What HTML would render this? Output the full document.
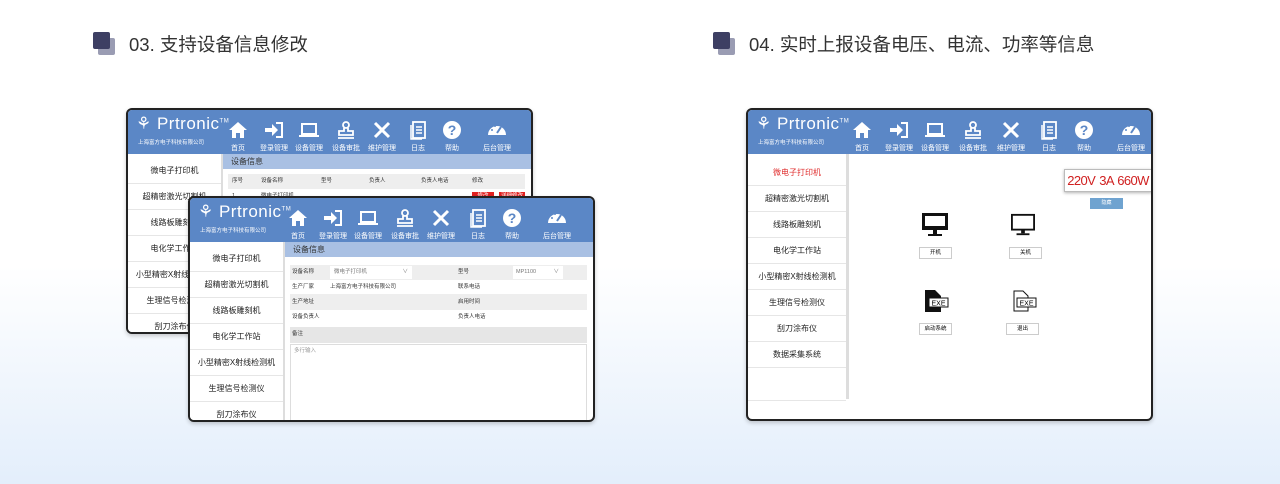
<!DOCTYPE html>
<html><head><meta charset="utf-8"><style>
*{margin:0;padding:0;box-sizing:border-box}
body{width:1280px;height:484px;overflow:hidden;position:relative;font-family:"Liberation Sans","Noto Sans CJK SC",sans-serif;background:linear-gradient(180deg,#ffffff 0%,#ffffff 55%,#e3eefb 100%)}
.h{position:absolute;font-size:18.5px;color:#333;display:flex;align-items:center}
.sq{position:relative;width:24px;height:24px;margin-right:12px}
.sq i{position:absolute;width:17px;height:17px;border-radius:2px}
.sq .a{left:5px;top:6px;background:#9a9cb3}
.sq .b{left:0;top:0;background:#3d3f63}
.win{position:absolute;width:407px;background:#fff;border:2px solid #222;border-radius:6px;overflow:hidden;box-shadow:0 2px 4px rgba(0,0,0,.2)}
.hd{position:absolute;left:0;top:0;right:0;height:44px;background:#5b87c6;color:#fff}
.logo{position:absolute;left:8px;top:4px;font-size:17px;letter-spacing:.5px}
.logo sup{font-size:6px}
.sub{position:absolute;left:10px;top:28px;font-size:5.5px;white-space:nowrap}
.nav{position:absolute;top:10px;width:40px;text-align:center;font-size:7px;transform:translateX(-50%)}
.nav svg{display:block;margin:0 auto 3px;width:20px;height:20px}
.sb{position:absolute;left:0;top:44px;width:95px;bottom:0;background:#fff;border-right:2px solid #ddd;padding-top:4px}
.sb div{height:26px;line-height:26px;text-align:center;font-size:8px;color:#222;border-bottom:1px solid #e6e6e6}
.bar{position:absolute;left:95px;right:0;top:44px;height:15px;background:#a9c0e3;font-size:8px;line-height:15px;padding-left:8px;color:#333}
.row{position:absolute;left:100px;right:6px;height:15px;font-size:5.5px;line-height:15px;color:#333}
</style></head><body>

<div class="h" style="left:93px;top:31px"><div class="sq"><i class="a"></i><i class="b"></i></div>03. 支持设备信息修改</div>
<div class="h" style="left:713px;top:31px"><div class="sq"><i class="a"></i><i class="b"></i></div>04. 实时上报设备电压、电流、功率等信息</div>

<svg width="0" height="0" style="position:absolute">
<defs>
<g id="i1"><path d="M10 2L1 10H4V18H8V13H12V18H16V10H19Z" fill="#fff"/></g>
<g id="i2"><path d="M1 8H8V4L14 10L8 16V12H1Z" fill="#fff"/><path d="M12 3H18V17H12" stroke="#fff" stroke-width="2" fill="none"/></g>
<g id="i3"><rect x="3" y="4" width="14" height="10" stroke="#fff" stroke-width="2" fill="none"/><path d="M0 16H20" stroke="#fff" stroke-width="2"/></g>
<g id="i4"><circle cx="10" cy="5" r="3" stroke="#fff" stroke-width="1.8" fill="none"/><path d="M8 8V11H3V15H17V11H12V8M2 18H18" stroke="#fff" stroke-width="1.8" fill="none"/></g>
<g id="i5"><path d="M3 3L17 17M17 3L3 17" stroke="#fff" stroke-width="3"/></g>
<g id="i6"><rect x="5" y="2" width="12" height="16" stroke="#fff" stroke-width="1.8" fill="none"/><path d="M3 5V19H14M8 7H14M8 10H14M8 13H14" stroke="#fff" stroke-width="1.5" fill="none"/></g>
<g id="i7"><circle cx="10" cy="10" r="9" fill="#fff"/><text x="10" y="15" font-size="14" font-weight="bold" text-anchor="middle" fill="#5b87c6" font-family="Liberation Sans">?</text></g>
<g id="i8"><path d="M1 15A9 9 0 1 1 19 15Z" fill="#fff"/><path d="M10 13L14 7" stroke="#5b87c6" stroke-width="2"/><circle cx="5" cy="10" r="1" fill="#5b87c6"/><circle cx="8" cy="6" r="1" fill="#5b87c6"/></g>
</defs></svg>

<!-- Window 1 -->
<div class="win" style="left:126px;top:108px;height:226px">
 <div class="hd">
  <div class="logo">⚘ Prtronic<sup>TM</sup></div><div class="sub">上海富方电子科技有限公司</div>
  <div class="nav" style="left:110px"><svg viewBox="0 0 20 20"><use href="#i1"/></svg>首页</div>
  <div class="nav" style="left:146px"><svg viewBox="0 0 20 20"><use href="#i2"/></svg>登录管理</div>
  <div class="nav" style="left:181px"><svg viewBox="0 0 20 20"><use href="#i3"/></svg>设备管理</div>
  <div class="nav" style="left:218px"><svg viewBox="0 0 20 20"><use href="#i4"/></svg>设备审批</div>
  <div class="nav" style="left:254px"><svg viewBox="0 0 20 20"><use href="#i5"/></svg>维护管理</div>
  <div class="nav" style="left:290px"><svg viewBox="0 0 20 20"><use href="#i6"/></svg>日志</div>
  <div class="nav" style="left:324px"><svg viewBox="0 0 20 20"><use href="#i7"/></svg>帮助</div>
  <div class="nav" style="left:369px"><svg viewBox="0 0 20 20"><use href="#i8"/></svg>后台管理</div>
 </div>
 <div class="sb"><div>微电子打印机</div><div>超精密激光切割机</div><div>线路板雕刻机</div><div>电化学工作站</div><div>小型精密X射线检测机</div><div>生理信号检测仪</div><div>刮刀涂布仪</div></div>
 <div class="bar">设备信息</div>
 <div class="row" style="top:64px;background:#eee"><span style="position:absolute;left:4px">序号</span><span style="position:absolute;left:33px">设备名称</span><span style="position:absolute;left:93px">型号</span><span style="position:absolute;left:141px">负责人</span><span style="position:absolute;left:193px">负责人电话</span><span style="position:absolute;left:244px">修改</span></div>
 <div class="row" style="top:79px"><span style="position:absolute;left:4px">1</span><span style="position:absolute;left:33px">微电子打印机</span><span style="position:absolute;left:244px;top:3px;width:22px;height:9px;background:#e02020;color:#fff;line-height:9px;text-align:center">修改</span><span style="position:absolute;left:271px;top:3px;width:26px;height:9px;background:#e02020;color:#fff;line-height:9px;text-align:center">详细修改</span></div>
</div>

<!-- Window 2 -->
<div class="win" style="left:188px;top:196px;height:226px">
 <div class="hd">
  <div class="logo">⚘ Prtronic<sup>TM</sup></div><div class="sub">上海富方电子科技有限公司</div>
  <div class="nav" style="left:108px"><svg viewBox="0 0 20 20"><use href="#i1"/></svg>首页</div>
  <div class="nav" style="left:143px"><svg viewBox="0 0 20 20"><use href="#i2"/></svg>登录管理</div>
  <div class="nav" style="left:178px"><svg viewBox="0 0 20 20"><use href="#i3"/></svg>设备管理</div>
  <div class="nav" style="left:215px"><svg viewBox="0 0 20 20"><use href="#i4"/></svg>设备审批</div>
  <div class="nav" style="left:251px"><svg viewBox="0 0 20 20"><use href="#i5"/></svg>维护管理</div>
  <div class="nav" style="left:288px"><svg viewBox="0 0 20 20"><use href="#i6"/></svg>日志</div>
  <div class="nav" style="left:322px"><svg viewBox="0 0 20 20"><use href="#i7"/></svg>帮助</div>
  <div class="nav" style="left:367px"><svg viewBox="0 0 20 20"><use href="#i8"/></svg>后台管理</div>
 </div>
 <div class="sb"><div>微电子打印机</div><div>超精密激光切割机</div><div>线路板雕刻机</div><div>电化学工作站</div><div>小型精密X射线检测机</div><div>生理信号检测仪</div><div>刮刀涂布仪</div></div>
 <div class="bar">设备信息</div>
 <div class="row" style="top:67px;background:#eee"><span style="position:absolute;left:2px">设备名称</span><span style="position:absolute;left:40px;top:1px;width:82px;height:13px;background:#fff;line-height:13px;padding-left:4px;color:#777">微电子打印机<span style="position:absolute;right:4px">∨</span></span><span style="position:absolute;left:168px">型号</span><span style="position:absolute;left:223px;top:1px;width:50px;height:13px;background:#fff;line-height:13px;padding-left:3px;color:#777">MP1100<span style="position:absolute;right:4px">∨</span></span></div>
 <div class="row" style="top:82px;border-bottom:1px solid #eee"><span style="position:absolute;left:2px">生产厂家</span><span style="position:absolute;left:40px">上海富方电子科技有限公司</span><span style="position:absolute;left:168px">联系电话</span></div>
 <div class="row" style="top:97px;background:#eee"><span style="position:absolute;left:2px">生产地址</span><span style="position:absolute;left:168px">启用时间</span></div>
 <div class="row" style="top:112px"><span style="position:absolute;left:2px">设备负责人</span><span style="position:absolute;left:168px">负责人电话</span></div>
 <div class="row" style="top:129px;height:16px;background:#e6e6e6"><span style="position:absolute;left:2px">备注</span></div>
 <div class="row" style="top:146px;height:80px;border:1px solid #ddd;line-height:12px;color:#999;padding-left:3px">多行输入</div>
</div>

<!-- Window 3 -->
<div class="win" style="left:746px;top:108px;height:313px">
 <div class="hd">
  <div class="logo">⚘ Prtronic<sup>TM</sup></div><div class="sub">上海富方电子科技有限公司</div>
  <div class="nav" style="left:114px"><svg viewBox="0 0 20 20"><use href="#i1"/></svg>首页</div>
  <div class="nav" style="left:151px"><svg viewBox="0 0 20 20"><use href="#i2"/></svg>登录管理</div>
  <div class="nav" style="left:187px"><svg viewBox="0 0 20 20"><use href="#i3"/></svg>设备管理</div>
  <div class="nav" style="left:225px"><svg viewBox="0 0 20 20"><use href="#i4"/></svg>设备审批</div>
  <div class="nav" style="left:263px"><svg viewBox="0 0 20 20"><use href="#i5"/></svg>维护管理</div>
  <div class="nav" style="left:301px"><svg viewBox="0 0 20 20"><use href="#i6"/></svg>日志</div>
  <div class="nav" style="left:336px"><svg viewBox="0 0 20 20"><use href="#i7"/></svg>帮助</div>
  <div class="nav" style="left:383px"><svg viewBox="0 0 20 20"><use href="#i8"/></svg>后台管理</div>
 </div>
 <div class="sb" style="width:101px;bottom:20px;border-right:3px solid #ddd;padding-top:6px"><div style="color:#e03030">微电子打印机</div><div>超精密激光切割机</div><div>线路板雕刻机</div><div>电化学工作站</div><div>小型精密X射线检测机</div><div>生理信号检测仪</div><div>刮刀涂布仪</div><div>数据采集系统</div></div>
 <div style="position:absolute;left:0;width:98px;top:290px;border-top:1px solid #e6e6e6"></div>
 <div style="position:absolute;left:316px;top:59px;width:88px;height:23px;border:1px solid #bbb;box-shadow:0 1px 3px rgba(0,0,0,.3);color:#d02020;font-size:13px;line-height:21px;text-align:center;white-space:nowrap;letter-spacing:-0.6px;word-spacing:1px;overflow:hidden">220V 3A 660W</div>
 <div style="position:absolute;left:342px;top:88px;width:33px;height:11px;background:#6fa3d0;color:#fff;font-size:5px;line-height:11px;text-align:center">隐藏</div>
 <svg style="position:absolute;left:174px;top:103px" width="26" height="24" viewBox="0 0 26 24"><rect x="0" y="0" width="26" height="17" fill="#111"/><rect x="3" y="3" width="20" height="10" fill="#fff"/><rect x="11" y="17" width="4" height="4" fill="#111"/><rect x="6" y="21" width="14" height="2" fill="#111"/></svg>
 <svg style="position:absolute;left:263px;top:103px" width="24" height="24" viewBox="0 0 26 24"><rect x="1" y="1" width="24" height="16" stroke="#111" stroke-width="2" fill="none"/><rect x="11" y="17" width="4" height="4" fill="#111"/><rect x="6" y="21" width="14" height="2" fill="#111"/></svg>
 <div style="position:absolute;left:171px;top:137px;width:33px;height:12px;border:1px solid #ccc;font-size:5.5px;line-height:10px;text-align:center">开机</div>
 <div style="position:absolute;left:261px;top:137px;width:33px;height:12px;border:1px solid #ccc;font-size:5.5px;line-height:10px;text-align:center">关机</div>
 <svg style="position:absolute;left:177px;top:180px" width="24" height="22" viewBox="0 0 24 22"><path d="M0 0H10L16 6V22H0Z" fill="#111"/><rect x="4" y="8" width="19" height="9" fill="#fff" stroke="#111"/><text x="13.5" y="15.5" font-size="7" text-anchor="middle" font-family="Liberation Sans">EXE</text></svg>
 <svg style="position:absolute;left:265px;top:180px" width="24" height="22" viewBox="0 0 24 22"><path d="M1 1H10L15 6V21H1Z" fill="none" stroke="#111"/><rect x="4" y="8" width="19" height="9" fill="#fff" stroke="#111"/><text x="13.5" y="15.5" font-size="7" text-anchor="middle" font-family="Liberation Sans">EXE</text></svg>
 <div style="position:absolute;left:171px;top:213px;width:33px;height:12px;border:1px solid #ccc;font-size:5.5px;line-height:10px;text-align:center">启动系统</div>
 <div style="position:absolute;left:258px;top:213px;width:33px;height:12px;border:1px solid #ccc;font-size:5.5px;line-height:10px;text-align:center">退出</div>
</div>
</body></html>
